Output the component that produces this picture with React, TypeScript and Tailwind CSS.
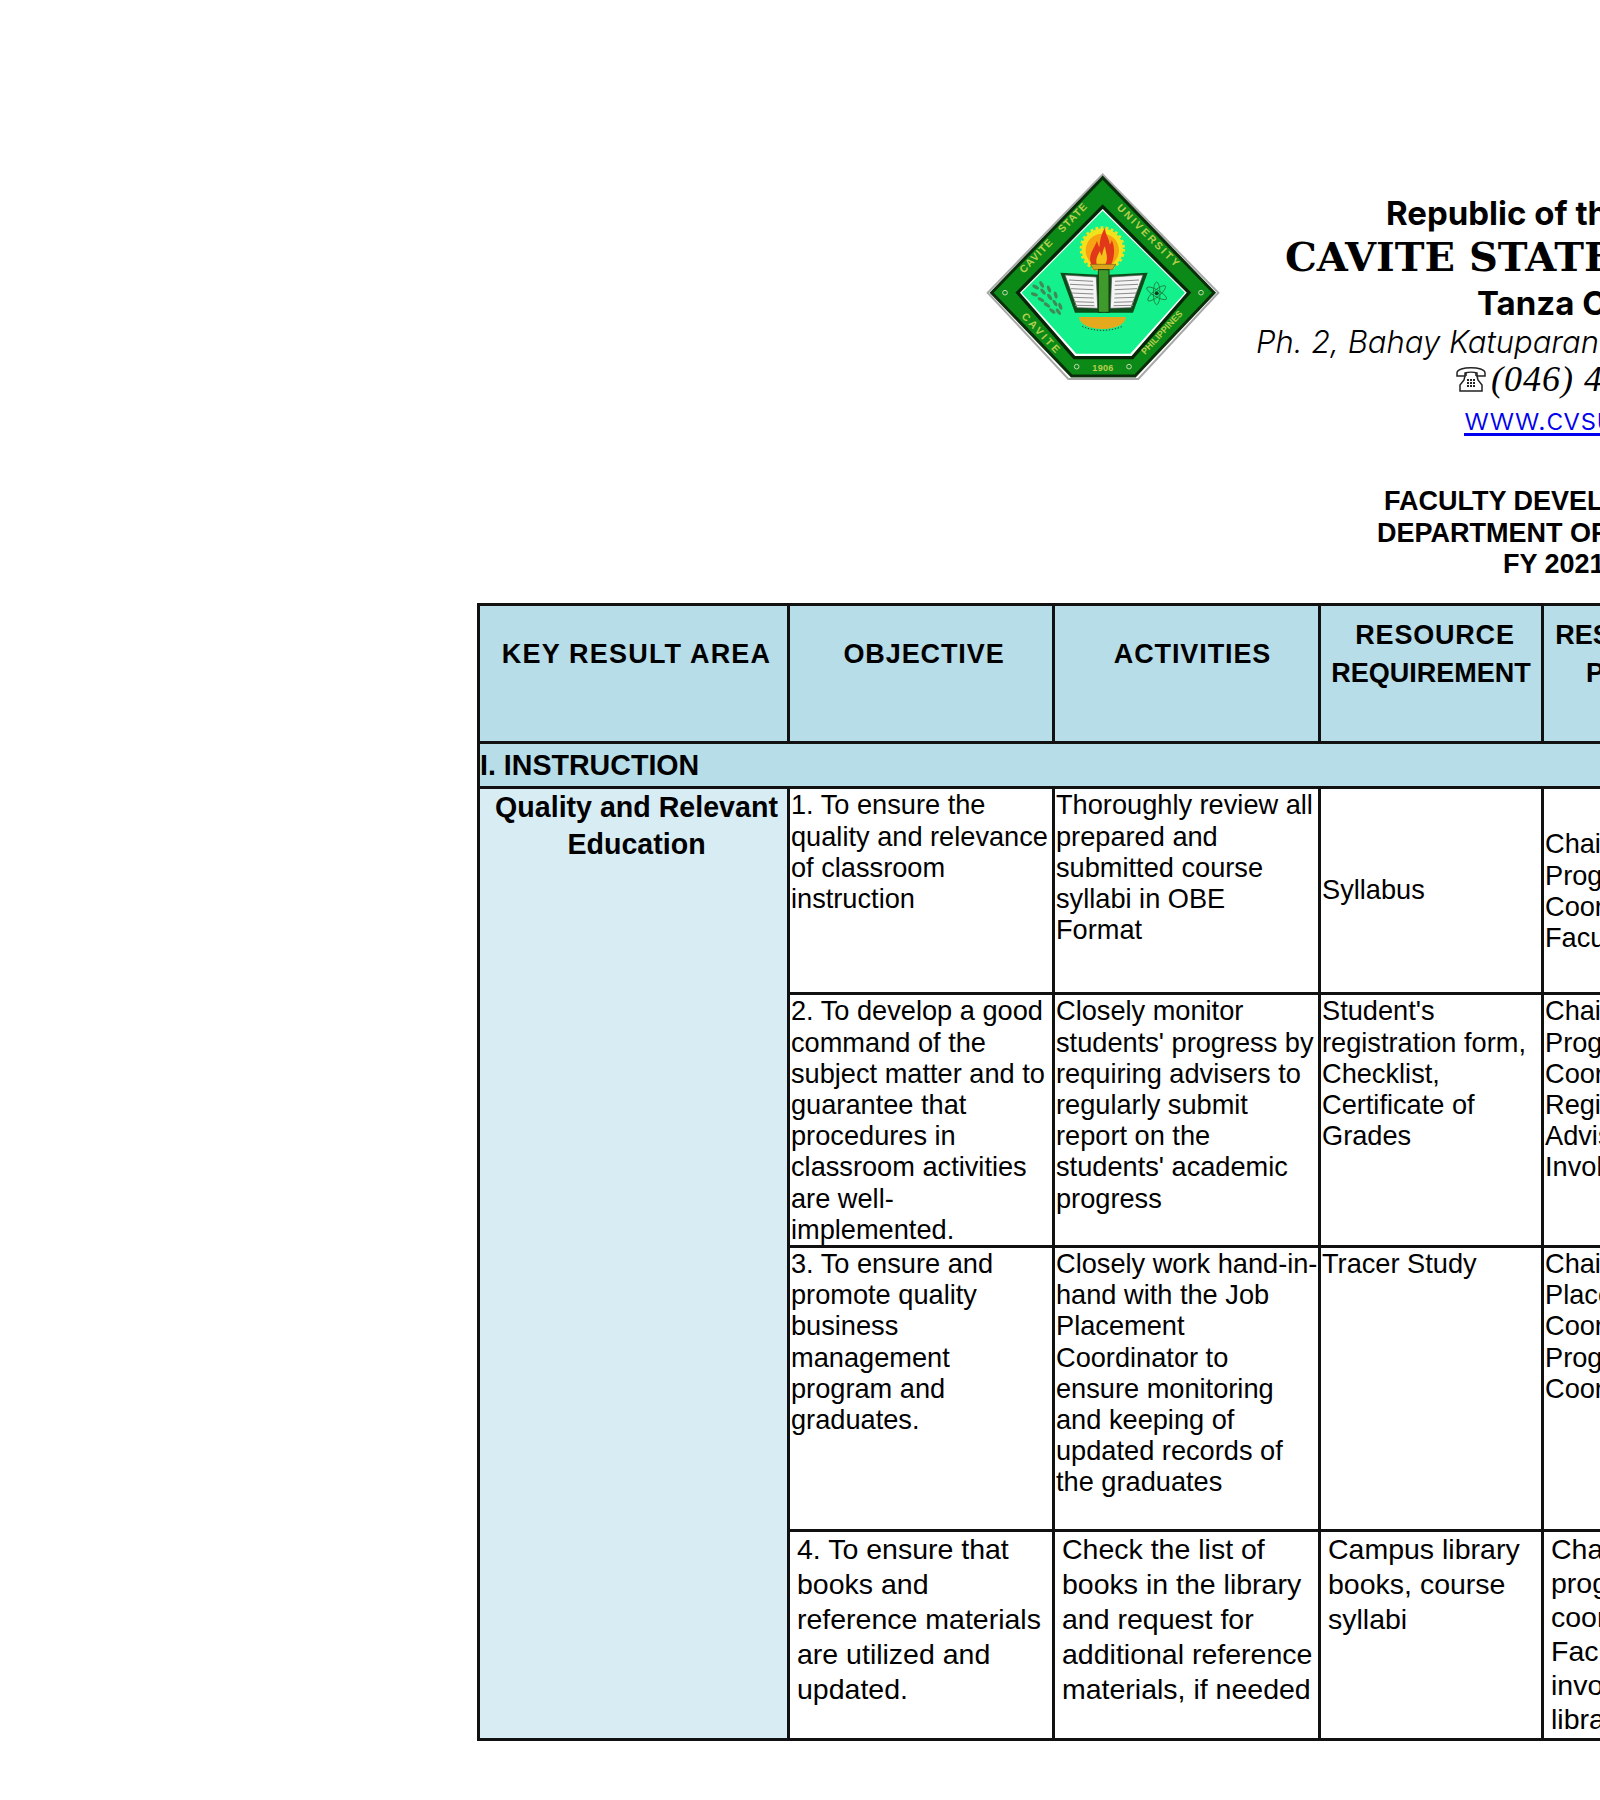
import React from 'react';

const leaves = [
  [182, 366, 30], [200, 358, 60], [178, 388, 20], [204, 380, 50], [222, 372, 70],
  [198, 404, 30], [224, 396, 55], [242, 390, 75], [216, 420, 35], [240, 414, 60],
  [232, 438, 40], [256, 424, 70], [250, 440, 55],
];

const Logo = () => (
  <svg viewBox="0 0 750 660" className="w-[250px] h-[220px] shrink-0">
    <polygon points="383,28 730,383 490,642 280,642 38,383" fill="#fff" stroke="#a9a9a9" strokeWidth="6" />
    <polygon points="383,38 717,383 480,633 290,633 50,383" fill="#0c8a18" stroke="#0a2f0a" strokeWidth="9" />
    <polygon points="383,125 642,383 472,578 298,578 128,383" fill="#fff" stroke="#062406" strokeWidth="10" />
    <polygon points="383,137 630,383 466,566 304,566 140,383" fill="#14f08c" />
    {/* band lettering */}
    <g fill="#b9cf4e" fontFamily="'Liberation Sans', sans-serif" fontWeight="700" fontSize="31" letterSpacing="3">
      <text transform="translate(146,326) rotate(-46)">CAVITE</text>
      <text transform="translate(262,205) rotate(-46)">STATE</text>
      <text transform="translate(424,130) rotate(45)" letterSpacing="7">UNIVERSITY</text>
      <text transform="translate(138,455) rotate(47)" letterSpacing="8">CAVITE</text>
      <text transform="translate(510,570) rotate(-47)" fontSize="27" letterSpacing="0">PHILIPPINES</text>
      <text x="352" y="618" fontSize="27" letterSpacing="1">1906</text>
    </g>
    <g fill="#0c8a18" stroke="#c5d8b0" strokeWidth="3">
      <circle cx="90" cy="383" r="7" />
      <circle cx="678" cy="383" r="7" />
      <circle cx="305" cy="605" r="7" />
      <circle cx="462" cy="605" r="7" />
    </g>
    {/* sun and flame */}
    <circle cx="382" cy="252" r="62" fill="#f2e21e" stroke="#f2e21e" strokeWidth="12" strokeDasharray="8 7" />
    <circle cx="382" cy="256" r="50" fill="#f7a312" />
    <path d="M350 300c-14-28 6-46 16-72 3 12 5 16 8 18 0-18 4-38 16-58 0 20 14 34 14 50 4-4 6-8 6-14 10 22 10 50-2 76z" fill="#e2381a" />
    <path d="M366 300c-6-16 2-30 9-42 1 8 4 12 6 14 2-10 4-20 9-28 2 20 12 34 0 56z" fill="#f6c21a" />
    <path d="M346 298h76l-10 16h-56z" fill="#d9a31e" stroke="#7a5a12" strokeWidth="2" />
    {/* open book */}
    <path d="M256 323l116 6 8 114h-80z" fill="#0b4d18" />
    <path d="M518 323l-116 6-8 114h80z" fill="#0b4d18" />
    <path d="M270 330l94 6 4 94-62-2z" fill="#f4f4f4" stroke="#555" strokeWidth="2" />
    <path d="M504 330l-94 6-4 94 62-2z" fill="#f4f4f4" stroke="#555" strokeWidth="2" />
    <g stroke="#8a8a8a" strokeWidth="3">
      <path d="M282 345l72 4M285 358l70 3M288 371l67 3M291 384l64 3M294 397l62 2M297 410l60 2M300 421l58 1" />
      <path d="M492 345l-72 4M489 358l-70 3M486 371l-67 3M483 384l-64 3M480 397l-62 2M477 410l-60 2M474 421l-58 1" />
    </g>
    <rect x="370" y="314" width="32" height="128" fill="#3f9a2c" stroke="#123c12" strokeWidth="3" />
    {/* base */}
    <path d="M312 456h140c2 20-30 36-70 36s-70-16-70-36z" fill="#e4a91c" />
    <path d="M322 484c34 16 86 16 120 0" fill="none" stroke="#333" strokeWidth="3" strokeDasharray="4 5" />
    {/* sprigs */}
    <g fill="#3f8a55">
      {leaves.map(([x, y, r], i) => (
        <ellipse key={i} cx={x} cy={y} rx="11" ry="5" transform={`rotate(${r} ${x} ${y})`} />
      ))}
    </g>
    {/* atom */}
    <g fill="none" stroke="#1f7a3a" strokeWidth="2.5">
      <ellipse cx="545" cy="385" rx="34" ry="10" transform="rotate(30 545 385)" />
      <ellipse cx="545" cy="385" rx="34" ry="10" transform="rotate(-40 545 385)" />
      <ellipse cx="545" cy="385" rx="34" ry="10" transform="rotate(90 545 385)" />
    </g>
    <circle cx="545" cy="385" r="6" fill="#0b3d1a" />
  </svg>
);

const Phone = () => (
  <svg viewBox="0 0 32 28" className="w-[32px] h-[28px] shrink-0" fill="none" stroke="#222" strokeWidth="1.5">
    <path d="M2 8c0-7 28-7 28 0v3h-8V8c-3-1-9-1-12 0v3H2z" />
    <path d="M10 11l-1 4-4 5v6h22v-6l-4-5-1-4" />
    <path d="M11 8v3M21 8v3" />
    <g fill="#222" stroke="none">
      <rect x="12" y="14" width="2" height="2" />
      <rect x="15" y="14" width="2" height="2" />
      <rect x="18" y="14" width="2" height="2" />
      <rect x="12" y="17" width="2" height="2" />
      <rect x="15" y="17" width="2" height="2" />
      <rect x="18" y="17" width="2" height="2" />
      <rect x="12" y="20" width="2" height="2" />
      <rect x="15" y="20" width="2" height="2" />
      <rect x="18" y="20" width="2" height="2" />
    </g>
  </svg>
);

const th = 'border-[3px] border-[#111] bg-[#b7dde8] font-bold text-center align-middle pb-[37px] leading-[37.5px] text-[27px]';
const td = 'border-[3px] border-[#111] align-top pl-[1px] pr-0 text-[27.2px] leading-[31.2px]';
const tdLast = 'border-[3px] border-[#111] align-top pl-[7px] pr-0 text-[28.5px] leading-[35px]';

export default function App() {
  return (
    <div className="w-[1600px] h-[1800px] overflow-hidden bg-white text-black font-['Liberation_Sans',sans-serif]">
      <div className="flex pt-[165px] pl-[975px] w-[3000px]">
        <Logo />
        <div className="flex flex-col whitespace-nowrap font-['Inter',sans-serif]">
          <div className="ml-[161px] mt-[28px] h-[40px] leading-[40px] text-[33px] font-bold">Republic of the Philippines</div>
          <div className="ml-[60px] mt-[2px] h-[44px] leading-[44px] text-[40px] font-bold font-['DejaVu_Serif',serif]">CAVITE STATE UNIVERSITY</div>
          <div className="ml-[252px] mt-[2px] h-[44px] leading-[44px] text-[33px] font-bold">Tanza Campus</div>
          <div className="ml-[31px] -mt-[3px] h-[40px] leading-[40px] text-[31px] italic font-light">Ph. 2, Bahay Katuparan</div>
          <div className="ml-[230px] -mt-[1px] h-[36px] flex items-center gap-[4px]">
            <Phone />
            <span className="text-[36px] italic tracking-[1px] font-['Liberation_Serif',serif]">(046) 4</span>
          </div>
          <div className="ml-[239px] mt-[3px] h-[38px] leading-[38px] text-[31px] font-light text-[#0000ee] underline underline-offset-[3px]">www.cvsu.edu.ph</div>
        </div>
      </div>
      <div className="flex flex-col items-start whitespace-nowrap font-bold text-[27px] leading-[31.5px] mt-[48px]">
        <div className="ml-[1384px]">FACULTY DEVELOPMENT</div>
        <div className="ml-[1377px]">DEPARTMENT OF</div>
        <div className="ml-[1503px]">FY 2021</div>
      </div>
      <table className="ml-[477px] mt-[22px] w-[1278px] table-fixed border-collapse border-[3px] border-[#111]">
        <colgroup>
          <col className="w-[310px]" />
          <col className="w-[265px]" />
          <col className="w-[266px]" />
          <col className="w-[223px]" />
          <col className="w-[214px]" />
        </colgroup>
        <tbody>
          <tr className="h-[138px]">
            <th className={`${th} pl-[6px] tracking-[1.2px]`}>KEY RESULT AREA</th>
            <th className={`${th} pl-[6px] tracking-[0.9px]`}>OBJECTIVE</th>
            <th className={`${th} pl-[12px] tracking-[0.9px]`}>ACTIVITIES</th>
            <th className={th}><span className="tracking-[0.8px] pl-[8px]">RESOURCE</span><br />REQUIREMENT</th>
            <th className={`${th} pl-[5px]`}>RESPONSIBLE<br />PERSONS</th>
          </tr>
          <tr className="h-[42px]">
            <td colSpan={5} className="border-[3px] border-[#111] bg-[#b7dde8] font-bold text-[28.6px]">I. INSTRUCTION</td>
          </tr>
          <tr className="h-[206px]">
            <td rowSpan={4} className="border-[3px] border-[#111] bg-[#d8ecf3] align-top text-center font-bold text-[28.6px] leading-[37px] pl-[6px]">
              Quality and Relevant<br />Education
            </td>
            <td className={td}>1. To ensure the quality and relevance of classroom instruction</td>
            <td className={td}>Thoroughly review all prepared and submitted course syllabi in OBE Format</td>
            <td className="border-[3px] border-[#111] align-middle pl-[1px] text-[27.2px]">Syllabus</td>
            <td className="border-[3px] border-[#111] align-middle pl-[1px] text-[27.2px] leading-[31.2px]">Chairperson,<br />Program<br />Coordinator,<br />Faculty</td>
          </tr>
          <tr className="h-[252px]">
            <td className={td}>2. To develop a good command of the subject matter and to guarantee that procedures in classroom activities are well-implemented.</td>
            <td className={td}>Closely monitor students' progress by requiring advisers to regularly submit report on the students' academic progress</td>
            <td className={td}>Student's registration form, Checklist, Certificate of Grades</td>
            <td className={td}>Chairperson,<br />Program<br />Coordinator,<br />Registrar,<br />Advisers,<br />Involved</td>
          </tr>
          <tr className="h-[284px]">
            <td className={td}>3. To ensure and promote quality business management program and graduates.</td>
            <td className={td}>Closely work hand-in-hand with the Job Placement Coordinator to ensure monitoring and keeping of updated records of the graduates</td>
            <td className={td}>Tracer Study</td>
            <td className={td}>Chairperson,<br />Placement<br />Coordinator,<br />Program<br />Coordinator</td>
          </tr>
          <tr className="h-[209px]">
            <td className={tdLast}>4. To ensure that books and reference materials are utilized and updated.</td>
            <td className={tdLast}>Check the list of books in the library and request for additional reference materials, if needed</td>
            <td className={tdLast}>Campus library books, course syllabi</td>
            <td className="border-[3px] border-[#111] align-top pl-[7px] pr-0 text-[28.5px] leading-[34px]">Chairperson,<br />program<br />coordinator,<br />Faculty<br />involved,<br />library</td>
          </tr>
        </tbody>
      </table>
    </div>
  );
}
